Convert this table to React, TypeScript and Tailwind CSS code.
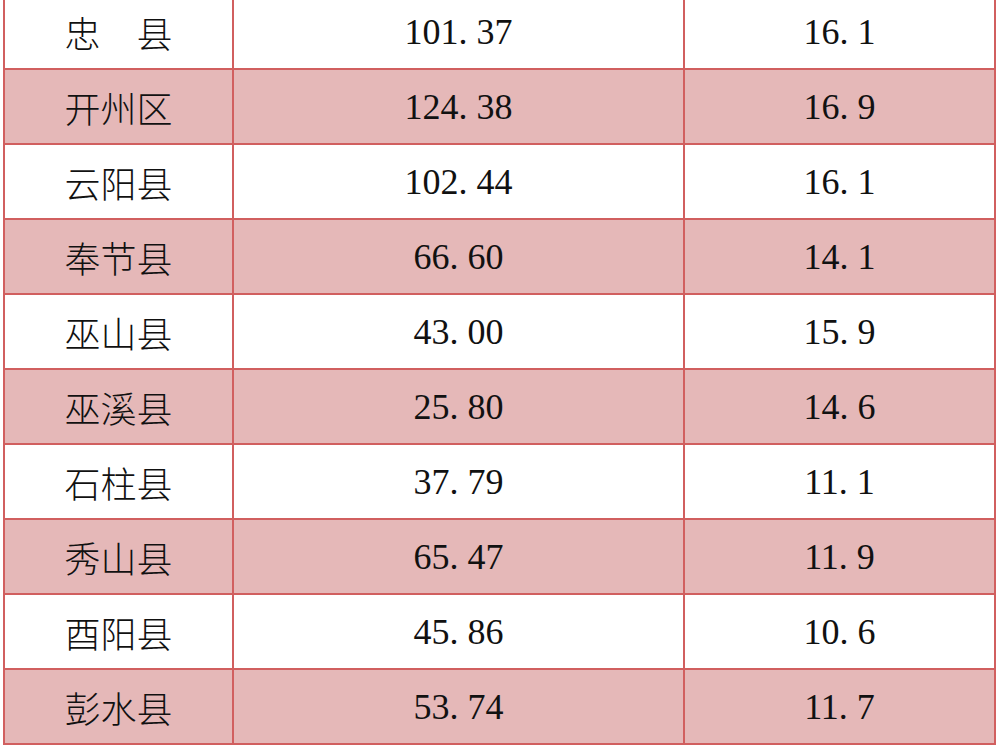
import React from 'react';

const rows: [string, string, string][] = [
    ['忠\u3000县', '101. 37', '16. 1'],
    ['开州区', '124. 38', '16. 9'],
    ['云阳县', '102. 44', '16. 1'],
    ['奉节县', '66. 60', '14. 1'],
    ['巫山县', '43. 00', '15. 9'],
    ['巫溪县', '25. 80', '14. 6'],
    ['石柱县', '37. 79', '11. 1'],
    ['秀山县', '65. 47', '11. 9'],
    ['酉阳县', '45. 86', '10. 6'],
    ['彭水县', '53. 74', '11. 7'],
];

const cjk = { fontFamily: '"Noto Sans CJK SC", sans-serif' };
const num = { fontFamily: '"Liberation Serif", serif' };

export default function App() {
    return (
        <div className="w-[1000px] h-[748px] overflow-hidden bg-white pl-[3px]">
            <div className="mt-[-5px] w-[993px] border-l-2 border-r-2 border-[#d15f5f]">
                {rows.map(([name, value, pct], i) => (
                    <div
                        key={name}
                        className={`flex h-[75px] border-b-2 border-[#d15f5f] text-[36px] text-[#111] ${
                            i % 2 === 1 ? 'bg-[#e5b8b8]' : 'bg-white'
                        }`}
                    >
                        <div className="flex w-[229px] items-center justify-center border-r-2 border-[#d15f5f]" style={cjk}>
                            <span className="font-light">{name}</span>
                        </div>
                        <div className="flex w-[451px] items-center justify-center border-r-2 border-[#d15f5f]" style={num}>
                            {value}
                        </div>
                        <div className="flex flex-1 items-center justify-center" style={num}>
                            {pct}
                        </div>
                    </div>
                ))}
            </div>
        </div>
    );
}
